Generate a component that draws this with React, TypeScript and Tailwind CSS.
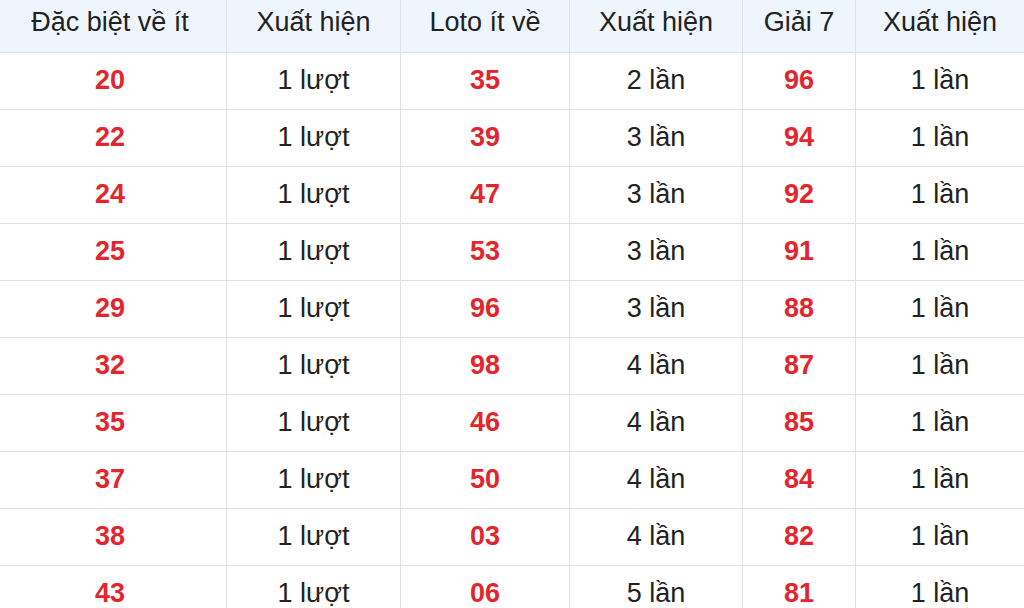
const rows: [string, string, string, string, string, string][] = [
  ["20", "1 lượt", "35", "2 lần", "96", "1 lần"],
  ["22", "1 lượt", "39", "3 lần", "94", "1 lần"],
  ["24", "1 lượt", "47", "3 lần", "92", "1 lần"],
  ["25", "1 lượt", "53", "3 lần", "91", "1 lần"],
  ["29", "1 lượt", "96", "3 lần", "88", "1 lần"],
  ["32", "1 lượt", "98", "4 lần", "87", "1 lần"],
  ["35", "1 lượt", "46", "4 lần", "85", "1 lần"],
  ["37", "1 lượt", "50", "4 lần", "84", "1 lần"],
  ["38", "1 lượt", "03", "4 lần", "82", "1 lần"],
  ["43", "1 lượt", "06", "5 lần", "81", "1 lần"],
];

const headers = ["Đặc biệt về ít", "Xuất hiện", "Loto ít về", "Xuất hiện", "Giải 7", "Xuất hiện"];
// first column runs a little past the left edge of the shot
const widths = ["w-[233px]", "w-[174px]", "w-[169px]", "w-[173px]", "w-[113px]", "w-[169px]"];

export default function App() {
  return (
    <div className="h-[608px] w-[1024px] overflow-hidden bg-white font-['Liberation_Sans',Arial,sans-serif]">
      <table className="ml-[-7px] w-[1031px] table-fixed border-collapse">
        <colgroup>
          {widths.map((w, i) => (
            <col key={i} className={w} />
          ))}
        </colgroup>
        <thead>
          <tr className="h-[52px] bg-[#eef5fc]">
            {headers.map((h, i) => (
              <th
                key={i}
                className="border-x border-b border-[#dde3ea] pb-[7px] text-center text-[27px] font-normal text-[#222]"
              >
                {h}
              </th>
            ))}
          </tr>
        </thead>
        <tbody>
          {rows.map((r, ri) => (
            <tr key={ri} className="h-[57px]">
              {r.map((c, ci) => (
                <td
                  key={ci}
                  className={
                    ci % 2 === 0
                      ? "border border-[#e2e2e2] text-center text-[27px] font-bold text-[#e3262d]"
                      : "border border-[#e2e2e2] text-center text-[27px] text-[#222]"
                  }
                >
                  {c}
                </td>
              ))}
            </tr>
          ))}
        </tbody>
      </table>
    </div>
  );
}
